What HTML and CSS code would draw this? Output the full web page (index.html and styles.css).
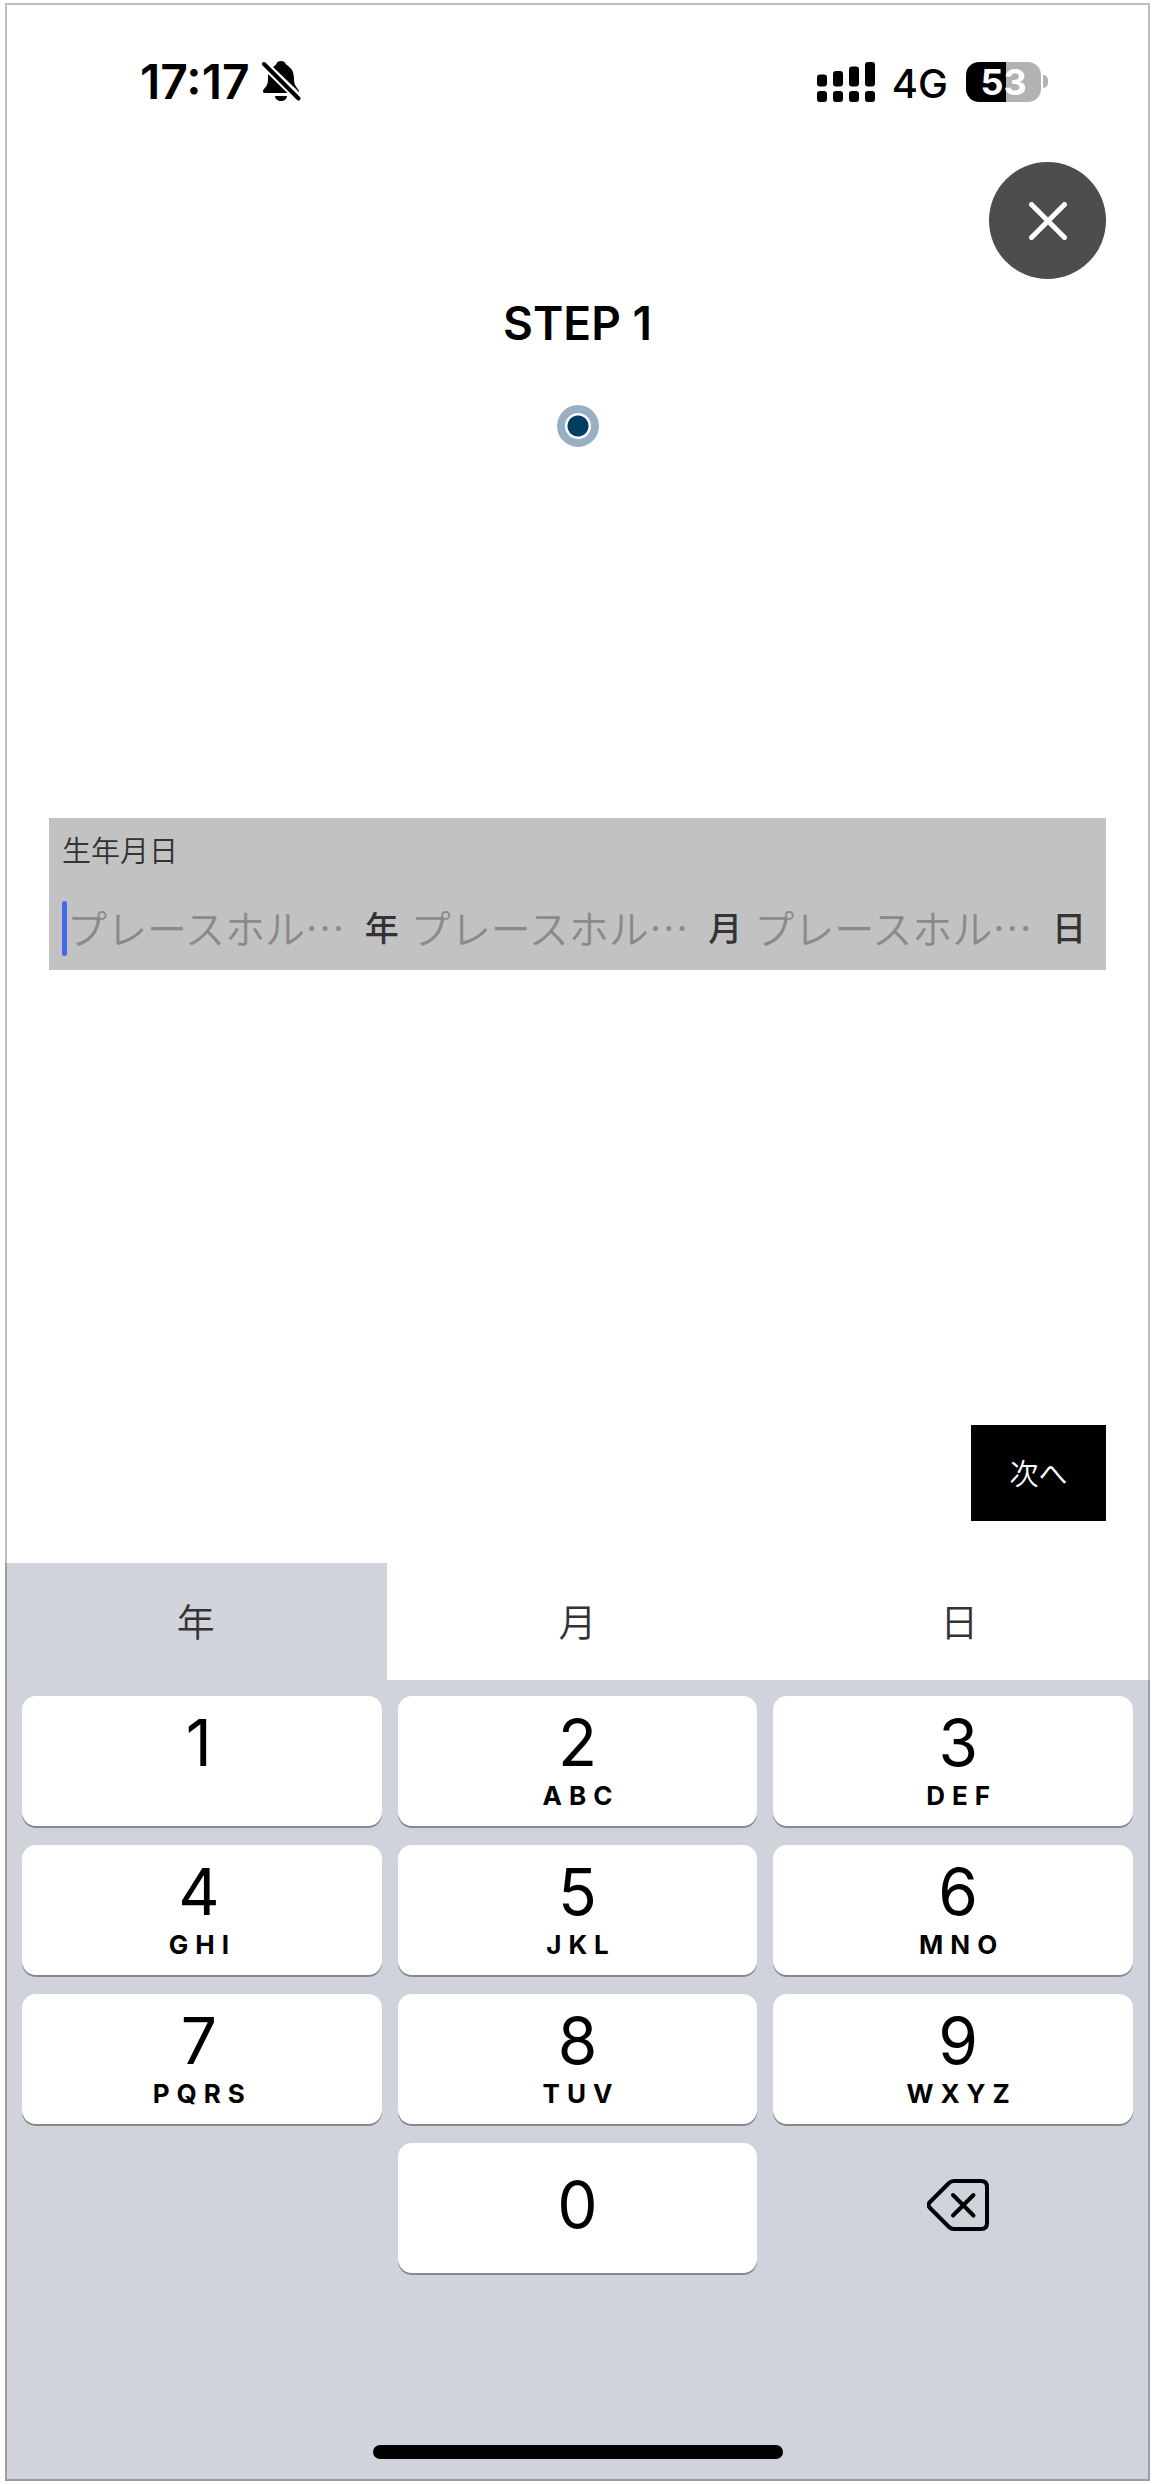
FILE: index.html
```html
<!DOCTYPE html>
<html lang="ja">
<head>
    <meta charset="UTF-8">
    <meta name="viewport" content="width=device-width, initial-scale=1.0">
    <title>生年月日</title>
    <link rel="stylesheet" href="styles.css">
</head>
<body>
    <div class="phone">
        <header class="status-bar">
            <div class="status-left">
                <span class="time">17:17</span>
                <svg class="bell" viewBox="0 0 40 42" aria-hidden="true">
                    <path d="M1 30.500C1 27 6 26.500 6 18.500V13L25.500 32H2.500Q1 32 1 30.500Z"/>
                    <path d="M11 6C13 4.500 14 4 14.500 2.500C15.500 .7 17 0 19 0S22.500 .7 23.500 2.500C24.500 5 32 6 32 17.500C32 25 35 26.500 37 29.500V31Z"/>
                    <path d="M13 35H25C25 38 22 40 19 40S13 38 13 35Z"/>
                    <path class="slash" d="M2 3L36.500 37.500"/>
                </svg>
            </div>
            <div class="status-right">
                <svg class="signal" viewBox="0 0 58 40" aria-hidden="true">
                    <rect x="0" y="12.500" width="10" height="12" rx="3"/>
                    <rect x="16" y="9" width="10" height="15.500" rx="3"/>
                    <rect x="32" y="4.500" width="10" height="20" rx="3"/>
                    <rect x="48" y="0" width="10" height="24.500" rx="3"/>
                    <rect x="0" y="29" width="10" height="11" rx="3"/>
                    <rect x="16" y="29" width="10" height="11" rx="3"/>
                    <rect x="32" y="29" width="10" height="11" rx="3"/>
                    <rect x="48" y="29" width="10" height="11" rx="3"/>
                </svg>
                <span class="network">4G</span>
                <div class="battery">
                    <span class="battery-level">53</span>
                    <span class="battery-tip"></span>
                </div>
            </div>
        </header>

        <div class="close-row">
            <button type="button" class="close" aria-label="閉じる">
                <svg viewBox="0 0 38 38" aria-hidden="true">
                    <path d="M2.500 2.500L35.500 35.500M35.500 2.500L2.500 35.500"/>
                </svg>
            </button>
        </div>

        <h1 class="step-title">STEP 1</h1>
        <div class="step-dot"></div>

        <form class="step-form">
            <fieldset class="birthday">
                <legend class="birthday-label">生年月日</legend>
                <div class="birthday-inputs">
                    <span class="caret"></span>
                    <input type="text" id="year" name="year" placeholder="プレースホル…" inputmode="numeric">
                    <label for="year">年</label>
                    <input type="text" id="month" name="month" placeholder="プレースホル…" inputmode="numeric">
                    <label for="month">月</label>
                    <input type="text" id="day" name="day" placeholder="プレースホル…" inputmode="numeric">
                    <label for="day">日</label>
                </div>
            </fieldset>
            <button type="submit" class="next">次へ</button>
        </form>

        <div class="tabs">
            <button type="button" class="tab active">年</button>
            <button type="button" class="tab">月</button>
            <button type="button" class="tab">日</button>
        </div>

        <div class="keyboard">
            <div class="keys">
                <button type="button" class="key left"><span class="digit">1</span></button>
                <button type="button" class="key"><span class="digit">2</span><span class="letters">ABC</span></button>
                <button type="button" class="key right"><span class="digit">3</span><span class="letters">DEF</span></button>
                <button type="button" class="key left"><span class="digit">4</span><span class="letters">GHI</span></button>
                <button type="button" class="key"><span class="digit">5</span><span class="letters">JKL</span></button>
                <button type="button" class="key right"><span class="digit">6</span><span class="letters">MNO</span></button>
                <button type="button" class="key left"><span class="digit">7</span><span class="letters">PQRS</span></button>
                <button type="button" class="key"><span class="digit">8</span><span class="letters">TUV</span></button>
                <button type="button" class="key right"><span class="digit">9</span><span class="letters">WXYZ</span></button>
                <button type="button" class="key zero"><span class="digit">0</span></button>
                <button type="button" class="key right delete" aria-label="削除">
                    <svg viewBox="0 0 62 52" aria-hidden="true">
                        <path d="M27 2H54Q60 2 60 8V44Q60 50 54 50H27Q24 50 22 48L3 29Q0 26 3 23L22 4Q24 2 27 2Z"/>
                        <path d="M26 16L46.500 36.500M46.500 16L26 36.500"/>
                    </svg>
                </button>
            </div>
            <div class="home-bar"></div>
        </div>
    </div>
</body>
</html>
```

FILE: styles.css
```css
* {
    box-sizing: border-box;
}

body {
    margin: 0;
    padding: 3px 5px;
    background-color: #fff;
    font-family: Inter, "Noto Sans CJK JP", sans-serif;
    color: #000;
}

button {
    font-family: inherit;
    border: none;
    padding: 0;
    cursor: pointer;
}

.phone {
    position: relative;
    display: flex;
    flex-direction: column;
    min-height: calc(100vh - 6px);
}

/* frame is drawn over the content so the keyboard shows through it */
.phone::after {
    content: "";
    position: absolute;
    inset: 0;
    border: 2px solid rgba(0, 0, 0, 0.25);
    pointer-events: none;
}

/* status bar */
.status-bar {
    display: flex;
    justify-content: space-between;
    align-items: center;
    height: 61px;
    margin: 48px 102px 0 135px;
}

.status-left,
.status-right {
    display: flex;
    align-items: center;
}

.time {
    font-size: 48px;
    font-weight: 600;
}

.bell {
    width: 40px;
    height: 42px;
    margin-left: 12px;
}

.slash {
    fill: none;
    stroke: #000;
    stroke-width: 4;
    stroke-linecap: round;
}

.signal {
    width: 58px;
    height: 40px;
    margin-right: 17px;
}

.network {
    padding-top: 4px;
    margin-right: 18px;
    font-size: 40px;
    font-weight: 500;
}

.battery {
    display: flex;
    align-items: center;
    gap: 2px;
}

.battery-level {
    width: 75px;
    height: 40px;
    border-radius: 13px;
    background: linear-gradient(to right, #000 53%, #b2b2b2 53%);
    color: #fff;
    font-size: 36px;
    font-weight: 700;
    line-height: 40px;
    text-align: center;
}

.battery-tip {
    width: 5px;
    height: 13px;
    border-radius: 0 5px 5px 0;
    background-color: #b2b2b2;
}

/* step header */
.close-row {
    display: flex;
    justify-content: flex-end;
    margin: 50px 44px 0;
}

.close {
    display: flex;
    align-items: center;
    justify-content: center;
    width: 117px;
    height: 117px;
    border-radius: 50%;
    background-color: #4d4d4d;
}

.close svg {
    width: 38px;
    height: 38px;
    fill: none;
    stroke: #fff;
    stroke-width: 5;
    stroke-linecap: round;
}

.step-title {
    margin: 16px 0 54px;
    font-size: 46px;
    font-weight: 600;
    line-height: 56px;
    text-align: center;
}

.step-dot {
    align-self: center;
    width: 42px;
    height: 42px;
    border: 8px solid #9ab0c2;
    border-radius: 50%;
    background: radial-gradient(circle, #003d61 10px, #fff 11px);
}

/* form */
.step-form {
    flex: 1;
    display: flex;
    flex-direction: column;
    padding: 371px 44px 42px;
}

.birthday {
    min-width: 0;
    margin: 0;
    padding: 13px 14px 14px 13px;
    border: none;
    background-color: #c2c2c2;
    font-family: "Noto Sans CJK JP", sans-serif;
    color: #333;
}

.birthday-label {
    float: left;
    width: 100%;
    padding: 0;
    margin-bottom: 34px;
    font-size: 29px;
    font-weight: 350;
    line-height: 36px;
}

.birthday-inputs {
    display: flex;
    align-items: center;
    width: 100%;
}

.caret {
    width: 5px;
    height: 55px;
    border-radius: 3px;
    background-color: #4169f0;
}

.birthday input {
    flex: 1;
    min-width: 0;
    height: 55px;
    padding: 0 0 4px;
    border: none;
    outline: none;
    background: none;
    font-family: inherit;
    font-size: 40px;
    font-weight: 350;
    color: #333;
}

.birthday input::placeholder {
    color: #8a8a8a;
    opacity: 1;
}

.birthday label {
    padding-bottom: 4px;
    margin: 0 12px 0 16px;
    font-size: 34px;
    font-weight: 500;
    line-height: 51px;
}

.birthday label:last-child {
    margin-right: 6px;
}

.next {
    align-self: flex-end;
    width: 135px;
    height: 96px;
    margin-top: auto;
    padding-bottom: 2px;
    background-color: #000;
    color: #fff;
    font-family: "Noto Sans CJK JP", sans-serif;
    font-size: 29px;
    font-weight: 350;
}

/* keyboard */
.tabs {
    display: grid;
    grid-template-columns: repeat(3, 1fr);
}

.tab {
    height: 117px;
    padding-bottom: 4px;
    background-color: #fff;
    color: #333;
    font-family: "Noto Sans CJK JP", sans-serif;
    font-size: 38px;
    font-weight: 350;
}

.tab.active {
    background-color: #d1d4dc;
}

.keyboard {
    padding: 16px 17px 22px;
    background-color: #d0d3db;
}

.keys {
    display: grid;
    grid-template-columns: repeat(3, 1fr);
    gap: 19px 16px;
}

.key {
    display: flex;
    flex-direction: column;
    align-items: center;
    height: 130px;
    padding-top: 15px;
    border-radius: 14px;
    background-color: #fff;
    box-shadow: 0 2px 0 #88898e;
    color: #000;
}

/* outer columns line up with the tabs above them */
.key.left {
    padding-right: 6px;
}

.key.right {
    padding-left: 10px;
}

.digit {
    font-size: 64px;
    line-height: 64px;
}

/* left padding balances the spacing after the last letter */
.letters {
    padding-left: 7px;
    font-size: 26px;
    font-weight: 700;
    line-height: 42px;
    letter-spacing: 7px;
}

.zero,
.delete {
    justify-content: center;
    padding-top: 0;
    padding-bottom: 6px;
}

.zero {
    grid-column: 2;
}

.delete {
    background: none;
    box-shadow: none;
}

.delete svg {
    width: 62px;
    height: 52px;
    fill: none;
    stroke: #000;
    stroke-width: 4;
    stroke-linecap: round;
    stroke-linejoin: round;
}

.home-bar {
    width: 410px;
    height: 14px;
    margin: 172px auto 0;
    border-radius: 7px;
    background-color: #000;
}
```
